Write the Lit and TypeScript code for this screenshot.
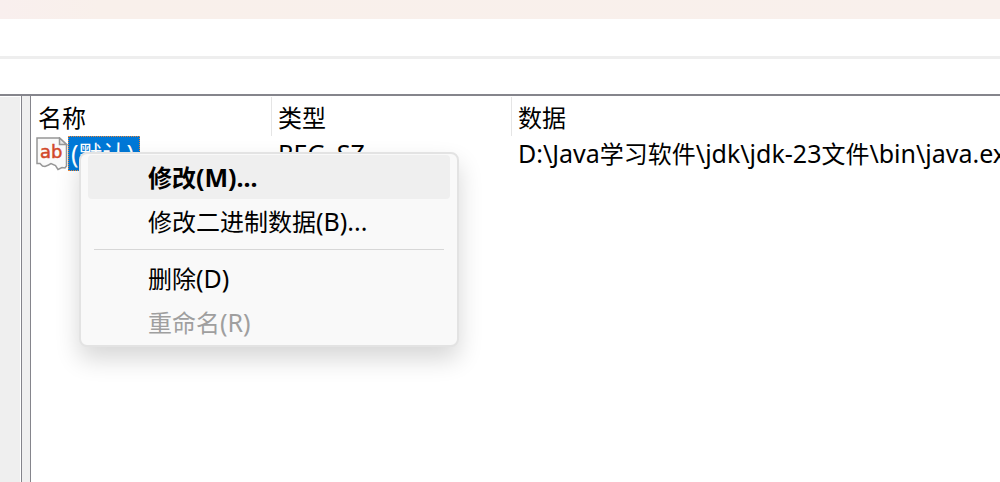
import { LitElement, html, css } from "lit";
import { customElement, state } from "lit/decorators.js";

interface RegistryValue {
  name: string;
  type: string;
  data: string;
}

interface MenuEntry {
  label: string;
  primary?: boolean;
  disabled?: boolean;
}

/* Latin runs are set slightly larger than the Han characters around them. */
const mixedText = (text: string) =>
  text
    .split(/([\x20-\x7e]+)/)
    .filter((run) => run !== "")
    .map((run) => (/^[\x20-\x7e]/.test(run) ? html`<span class="latin">${run}</span>` : run));

const latinStyles = css`
  .latin {
    font-size: 25px;
  }
`;

@customElement("string-value-icon")
class StringValueIcon extends LitElement {
  static styles = css`
    :host {
      display: block;
      flex: none;
      width: 32px;
      height: 34px;
    }
    .icon {
      display: block;
    }
    .letters {
      fill: #d2492a;
      stroke: #d2492a;
      stroke-width: 0.5px;
      font: 18px "DejaVu Sans", sans-serif;
    }
  `;

  render() {
    return html`
      <svg class="icon" width="32" height="34" viewBox="0 0 32 34" aria-hidden="true">
        <path
          d="M1 1H23.500L30.500 7.500V29L29 31L26 30.500L22 32.500L19.500 28.500L15 26.500L12.500 28L9 29.500L6.500 29L4 26.500H1Z"
          fill="#fafafa"
          stroke="#979797"
          stroke-width="1.500"
        />
        <path d="M23.500 1V7.500H30.500Z" fill="#e6e6e6" stroke="#979797" stroke-width="1.500" />
        <text class="letters" x="4" y="21">ab</text>
      </svg>
    `;
  }
}

@customElement("context-menu")
class ContextMenu extends LitElement {
  static styles = [
    latinStyles,
    css`
      :host {
        display: block;
      }
      .menu {
        box-sizing: border-box;
        display: flex;
        flex-direction: column;
        padding: 1px 7px;
        border: 2px solid #e3e3e3;
        border-radius: 8px;
        background: #f9f9f9;
        box-shadow: 0 12px 24px rgba(0, 0, 0, 0.16);
      }
      .item {
        height: 44px;
        padding: 0 60px;
        border: 0;
        border-radius: 4px;
        background: transparent;
        color: #000;
        font: inherit;
        text-align: left;
        white-space: nowrap;
      }
      .primary {
        background: #efefef;
        font-weight: 700;
      }
      .item:hover:enabled {
        background: #efefef;
      }
      .item:disabled {
        color: #9f9f9f;
      }
      .separator {
        height: 1px;
        margin: 6px;
        border: 0;
        background: #d7d7d7;
      }
    `,
  ];

  private groups: MenuEntry[][] = [
    [{ label: "修改(M)...", primary: true }, { label: "修改二进制数据(B)..." }],
    [{ label: "删除(D)" }, { label: "重命名(R)", disabled: true }],
  ];

  render() {
    return html`
      <div class="menu" role="menu">
        ${this.groups.map(
          (group, index) => html`
            ${index > 0 ? html`<hr class="separator" />` : null}
            ${group.map(
              (entry) => html`<button
                class="item ${entry.primary ? "primary" : ""}"
                role="menuitem"
                ?disabled=${entry.disabled}
              >${mixedText(entry.label)}</button>`
            )}
          `
        )}
      </div>
    `;
  }
}

@customElement("app-root")
class AppRoot extends LitElement {
  static styles = [
    latinStyles,
    css`
      :host {
        display: flex;
        flex-direction: column;
        height: 100vh;
        overflow: hidden;
        background: #fff;
        color: #000;
        font: 24px/32px "Noto Sans", "Noto Sans CJK SC", sans-serif;
      }
      .titlebar {
        flex: none;
        height: 19px;
        background: linear-gradient(90deg, #f9efee, #f9f0eb 10%, #f9f0ec);
      }
      .menubar {
        flex: none;
        height: 37px;
        border-bottom: 3px solid #eee;
      }
      .addressbar {
        flex: none;
        height: 35px;
      }
      .panes {
        flex: 1;
        display: flex;
        min-height: 0;
        border-top: 2px solid #85858c;
      }
      .tree {
        flex: none;
        width: 20px;
        margin-top: 1px;
        background: #efefef;
      }
      .splitter {
        flex: none;
        width: 8px;
        margin-left: 1px;
        border: solid #85858c;
        border-width: 0 1px;
        background: #f0f0f0;
      }
      .list {
        position: relative;
        flex: 1;
        min-width: 0;
        overflow: hidden;
      }
      .values {
        width: 100%;
        margin-top: 1px;
        border-collapse: separate;
        border-spacing: 0;
        table-layout: fixed;
      }
      .column {
        box-sizing: border-box;
        width: 240px;
        height: 39px;
        padding: 2px 0 0 6px;
        border-right: 1px solid #e5e5e5;
        font-weight: 400;
        text-align: left;
      }
      .column:first-child {
        width: 241px;
        padding-left: 7px;
      }
      .column:last-child {
        width: auto;
        border-right: 0;
      }
      .cell {
        height: 35px;
        padding: 0 0 0 6px;
        white-space: nowrap;
      }
      .cell:first-child {
        padding-left: 5px;
      }
      .name {
        display: flex;
        align-items: center;
      }
      .selected {
        box-sizing: border-box;
        height: 35px;
        padding: 0 5px 0 2px;
        border: 1px dotted #e8863a;
        background: #0078d7;
        color: #fff;
      }
      .popup {
        position: absolute;
        left: 48px;
        top: 56px;
        width: 380px;
      }
    `,
  ];

  @state() private values: RegistryValue[] = [
    { name: "(默认)", type: "REG_SZ", data: "D:\\Java学习软件\\jdk\\jdk-23文件\\bin\\java.exe" },
  ];

  render() {
    return html`
      <header class="titlebar"></header>
      <div class="menubar"></div>
      <div class="addressbar"></div>
      <main class="panes">
        <aside class="tree"></aside>
        <div class="splitter"></div>
        <section class="list">
          <table class="values">
            <thead>
              <tr>
                ${["名称", "类型", "数据"].map((title) => html`<th class="column" scope="col">${title}</th>`)}
              </tr>
            </thead>
            <tbody>
              ${this.values.map(
                (value) => html`<tr>
                  <td class="cell">
                    <div class="name">
                      <string-value-icon></string-value-icon>
                      <span class="selected">${mixedText(value.name)}</span>
                    </div>
                  </td>
                  <td class="cell">${mixedText(value.type)}</td>
                  <td class="cell">${mixedText(value.data)}</td>
                </tr>`
              )}
            </tbody>
          </table>
          <context-menu class="popup"></context-menu>
        </section>
      </main>
    `;
  }
}
